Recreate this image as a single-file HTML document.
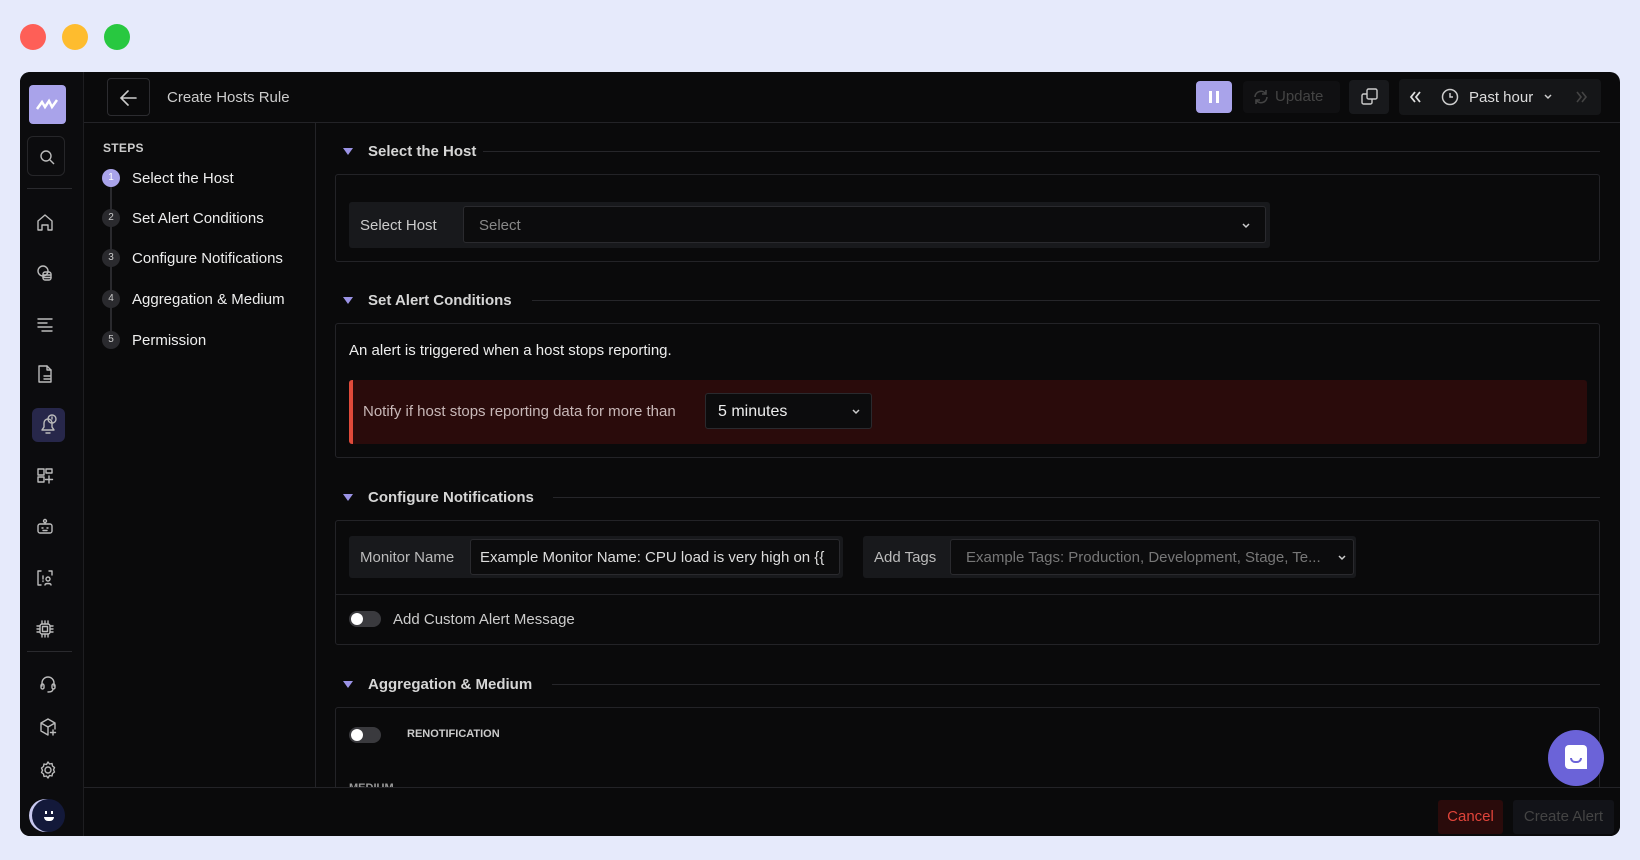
<!DOCTYPE html>
<html><head><meta charset="utf-8"><style>
*{box-sizing:border-box;margin:0;padding:0}
body{width:1640px;height:860px;background:#e6eafb;font-family:"Liberation Sans",sans-serif;position:relative;overflow:hidden;color:#ddd}
.a{position:absolute}
.dot{position:absolute;width:26px;height:26px;border-radius:50%;top:24px}
.win{position:absolute;left:20px;top:72px;width:1600px;height:764px;background:#0a0a0b;border-radius:10px;overflow:hidden}
.side{position:absolute;left:0;top:0;width:64px;height:764px;background:#0c0c0e;border-right:1px solid #1e1e21}
.ic{position:absolute;left:13px;width:24px;height:24px}
.ic svg{width:24px;height:24px;fill:none;stroke:#bbb;stroke-width:1.4;stroke-linecap:round;stroke-linejoin:round}
.hd{font-size:15px;font-weight:bold;color:#d6d6d6}
.tri{position:absolute;width:0;height:0;border-left:5px solid transparent;border-right:5px solid transparent;border-top:7px solid #9b93e6}
.line{position:absolute;height:1px;background:#26262a}
.box{position:absolute;left:315px;width:1265px;border:1px solid #232327;border-radius:3px}
.grp{position:absolute;background:#18191c;border-radius:3px}
.inp{position:absolute;background:#0c0c0d;border:1px solid #2a2a2e;border-radius:3px;font-size:15px}
.tog{position:absolute;width:32px;height:16px;border-radius:8px;background:#3a3a3e}
.tog:after{content:"";position:absolute;left:2px;top:2px;width:12px;height:12px;border-radius:50%;background:#fff}
.step{position:absolute;left:112px;font-size:15px;color:#eee}
.num{position:absolute;left:82px;width:18px;height:18px;border-radius:50%;background:#2a2a2e;color:#ccc;font-size:10px;text-align:center;line-height:18px}
</style></head><body>
<div class="dot" style="left:20px;background:#fe5f57"></div>
<div class="dot" style="left:62px;background:#febc2e"></div>
<div class="dot" style="left:104px;background:#28c840"></div>
<div class="win">
 <div class="side">
  <div class="a" style="left:9px;top:13px;width:37px;height:39px;background:#a9a3ea;border-radius:4px"><svg width="37" height="39"><path d="M8 24 L13 17 L16 22 L20 16 L23 22 L28 15" stroke="#fff" stroke-width="2.5" fill="none"/></svg></div>
  <div class="a" style="left:7px;top:64px;width:38px;height:40px;border:1px solid #262629;border-radius:6px"><svg width="38" height="40" style="fill:none;stroke:#bbb;stroke-width:1.4"><circle cx="18" cy="19" r="5"/><path d="M22 23l4 4"/></svg></div>
  <div class="a" style="left:7px;top:116px;width:45px;height:1px;background:#2a2a2e"></div>
  <div class="ic" style="top:138px"><svg><path d="M5 20V11l7-6 7 6v9h-4v-5h-6v5z"/></svg></div>
  <div class="ic" style="top:189px"><svg><circle cx="10" cy="10" r="5"/><rect x="10" y="11" width="8" height="8" rx="2"/><path d="M10 14h8M10 16.5h8"/></svg></div>
  <div class="ic" style="top:240px"><svg><path d="M5 7h14M5 11h9M5 15h14M9 19h10"/></svg></div>
  <div class="ic" style="top:290px"><svg><path d="M6 4h8l4 4v12H6z"/><path d="M14 4v4h4M11 14h6M11 17h6"/></svg></div>
  <div class="a" style="left:12px;top:336px;width:33px;height:34px;background:#27274a;border-radius:6px"></div>
  <div class="ic" style="top:341px;left:16px"><svg><path d="M6 17h12l-2-3v-4a4 4 0 0 0-8 0v4zM10 20h4"/><circle cx="16" cy="6" r="4"/><path d="M16 4v2"/></svg></div>
  <div class="ic" style="top:392px"><svg><rect x="5" y="5" width="6" height="6"/><rect x="13" y="5" width="6" height="4"/><rect x="5" y="13" width="6" height="5"/><path d="M16 12v7M12.5 15.5h7"/></svg></div>
  <div class="ic" style="top:443px"><svg><rect x="5" y="9" width="14" height="9" rx="2"/><circle cx="12" cy="6" r="1.5"/><path d="M12 7.5V9M9 13h1M14 13h1M10 15.5h4"/></svg></div>
  <div class="ic" style="top:494px"><svg><path d="M8 5H5v14h3M16 5h3v4"/><path d="M10 10v3M10 15v.5"/><circle cx="15" cy="13" r="2"/><path d="M12 19c0-2 6-2 6 0"/></svg></div>
  <div class="ic" style="top:545px"><svg><rect x="7" y="7" width="10" height="10" rx="2"/><rect x="9.5" y="9.5" width="5" height="5"/><path d="M4 9h3M4 12h3M4 15h3M17 9h3M17 12h3M17 15h3M9 4v3M12 4v3M15 4v3M9 17v3M12 17v3M15 17v3"/></svg></div>
  <div class="a" style="left:7px;top:579px;width:45px;height:1px;background:#2a2a2e"></div>
  <div class="ic" style="top:600px;left:16px"><svg><path d="M6 14v-3a6 6 0 0 1 12 0v3"/><rect x="5" y="12" width="3" height="5" rx="1.5"/><rect x="16" y="12" width="3" height="5" rx="1.5"/><path d="M17 17c0 2-2 3-5 3"/></svg></div>
  <div class="ic" style="top:643px;left:16px"><svg><path d="M12 4l7 4v6M5 8l7-4M5 8v8l7 4M5 8l7 4 7-4M12 12v8M17 15v5M14.5 17.5h5"/></svg></div>
  <div class="ic" style="top:686px;left:16px"><svg><circle cx="12" cy="12" r="3"/><path d="M12 4l1.5 2 2.5-.5.5 2.5 2 1.5-1 2.3 1 2.2-2 1.5-.5 2.5-2.5-.5L12 20l-1.5-2-2.5.5-.5-2.5-2-1.5 1-2.2-1-2.3 2-1.5.5-2.5 2.5.5z"/></svg></div>
  <div class="a" style="left:12px;top:727px;width:33px;height:33px;border-radius:50%;background:#13193a;box-shadow:-3px 0 0 #c8c8f0"><div class="a" style="left:13px;top:12px;width:2px;height:3px;background:#fff"></div><div class="a" style="left:19px;top:12px;width:2px;height:3px;background:#fff"></div><div class="a" style="left:12px;top:18px;width:10px;height:4px;border-radius:0 0 5px 5px;background:#fff"></div></div>
 </div>
 <!-- header -->
 <div class="a" style="left:64px;top:50px;width:1536px;height:1px;background:#232327"></div>
 <div class="a" style="left:87px;top:6px;width:43px;height:38px;border:1px solid #2c2c30;border-radius:4px"><svg width="43" height="38" style="fill:none;stroke:#ccc;stroke-width:1.6;stroke-linecap:round"><path d="M28 19H14M20 12l-7 7 7 7"/></svg></div>
 <div class="a" style="left:147px;top:17px;font-size:15px;color:#ccc">Create Hosts Rule</div>
 <div class="a" style="left:1176px;top:9px;width:36px;height:32px;background:#a9a3ea;border-radius:4px"><div class="a" style="left:13px;top:10px;width:3px;height:12px;background:#fff"></div><div class="a" style="left:20px;top:10px;width:3px;height:12px;background:#fff"></div></div>
 <div class="a" style="left:1223px;top:9px;width:97px;height:32px;background:#101012;border-radius:4px;color:#444;font-size:15px;line-height:32px;padding-left:32px">Update<svg class="a" style="left:9px;top:7px;fill:none;stroke:#444;stroke-width:1.6" width="18" height="18"><path d="M3 9a6 6 0 0 1 11-3M15 9a6 6 0 0 1-11 3M14 2v4h-4M4 16v-4h4"/></svg></div>
 <div class="a" style="left:1329px;top:8px;width:40px;height:34px;background:#18191c;border-radius:4px"><svg width="40" height="34" style="fill:none;stroke:#ccc;stroke-width:1.4"><rect x="18" y="9" width="10" height="10" rx="1.5"/><path d="M18 14h-3.5a1.5 1.5 0 0 0-1.5 1.5v7a1.5 1.5 0 0 0 1.5 1.5h7a1.5 1.5 0 0 0 1.5-1.5V19"/></svg></div>
 <div class="a" style="left:1379px;top:7px;width:202px;height:36px;background:#151618;border-radius:4px">
  <svg class="a" style="left:8px;top:10px;fill:none;stroke:#ddd;stroke-width:1.8" width="18" height="16"><path d="M8 3L4 8l4 5M13 3L9 8l4 5"/></svg>
  <svg class="a" style="left:42px;top:9px;fill:none;stroke:#ccc;stroke-width:1.5" width="18" height="18"><circle cx="9" cy="9" r="7.5"/><path d="M9 5v4h3"/></svg>
  <div class="a" style="left:70px;top:10px;font-size:15px;color:#ddd">Past hour</div>
  <svg class="a" style="left:144px;top:13px;fill:none;stroke:#ccc;stroke-width:1.5" width="10" height="10"><path d="M2 3l3 3 3-3"/></svg>
  <svg class="a" style="left:174px;top:10px;fill:none;stroke:#444;stroke-width:1.6" width="18" height="16"><path d="M4 3l4 5-4 5M9 3l4 5-4 5"/></svg>
 </div>
 <!-- steps -->
 <div class="a" style="left:295px;top:51px;width:1px;height:664px;background:#232327"></div>
 <div class="a" style="left:83px;top:69px;font-size:12px;font-weight:bold;color:#ccc;letter-spacing:.3px">STEPS</div>
 <div class="a" style="left:90px;top:106px;width:2px;height:160px;background:#2a2a2e"></div>
 <div class="num" style="top:97px;background:#a9a3ea;color:#fff">1</div><div class="step" style="top:98px">Select the Host</div>
 <div class="num" style="top:137px">2</div><div class="step" style="top:138px">Set Alert Conditions</div>
 <div class="num" style="top:177px">3</div><div class="step" style="top:178px">Configure Notifications</div>
 <div class="num" style="top:218px">4</div><div class="step" style="top:219px">Aggregation &amp; Medium</div>
 <div class="num" style="top:259px">5</div><div class="step" style="top:260px">Permission</div>
 <!-- content -->
 <div class="tri" style="left:323px;top:76px"></div><div class="a hd" style="left:348px;top:71px">Select the Host</div><div class="line" style="left:463px;top:79px;width:1117px"></div>
 <div class="box" style="top:102px;height:88px">
  <div class="grp" style="left:13px;top:27px;width:921px;height:46px"><div class="a" style="left:11px;top:15px;font-size:15px;color:#ccc">Select Host</div>
   <div class="inp" style="left:114px;top:4px;width:803px;height:37px;color:#888;padding:10px 15px">Select<svg class="a" style="right:14px;top:14px;fill:none;stroke:#ccc;stroke-width:1.5" width="10" height="10"><path d="M2 3l3 3 3-3"/></svg></div></div>
 </div>
 <div class="tri" style="left:323px;top:225px"></div><div class="a hd" style="left:348px;top:220px">Set Alert Conditions</div><div class="line" style="left:512px;top:228px;width:1068px"></div>
 <div class="box" style="top:251px;height:135px">
  <div class="a" style="left:13px;top:18px;font-size:15px;color:#eee">An alert is triggered when a host stops reporting.</div>
  <div class="a" style="left:13px;top:56px;width:1238px;height:64px;background:#2a0b0b;border-left:4px solid #e04a3a;border-radius:3px">
   <div class="a" style="left:10px;top:23px;font-size:15px;color:#c8b8b8">Notify if host stops reporting data for more than</div>
   <div class="inp" style="left:352px;top:13px;width:167px;height:36px;color:#eee;padding:9px 12px;font-size:16px">5 minutes<svg class="a" style="right:10px;top:13px;fill:none;stroke:#ccc;stroke-width:1.5" width="10" height="10"><path d="M2 3l3 3 3-3"/></svg></div>
  </div>
 </div>
 <div class="tri" style="left:323px;top:422px"></div><div class="a hd" style="left:348px;top:417px">Configure Notifications</div><div class="line" style="left:533px;top:425px;width:1047px"></div>
 <div class="box" style="top:448px;height:125px">
  <div class="grp" style="left:13px;top:15px;width:494px;height:42px"><div class="a" style="left:11px;top:13px;font-size:15px;color:#bbb">Monitor Name</div>
   <div class="inp" style="left:121px;top:3px;width:370px;height:36px;color:#ddd;padding:9px 9px;white-space:nowrap;overflow:hidden">Example Monitor Name: CPU load is very high on {{</div></div>
  <div class="grp" style="left:527px;top:15px;width:493px;height:42px"><div class="a" style="left:11px;top:13px;font-size:15px;color:#bbb">Add Tags</div>
   <div class="inp" style="left:87px;top:3px;width:404px;height:36px;color:#777;padding:9px 15px;white-space:nowrap">Example Tags: Production, Development, Stage, Te...<svg class="a" style="right:6px;top:13px;fill:none;stroke:#ccc;stroke-width:1.5" width="10" height="10"><path d="M2 3l3 3 3-3"/></svg></div></div>
  <div class="a" style="left:0;top:73px;width:1263px;height:1px;background:#232327"></div>
  <div class="tog" style="left:13px;top:90px"></div>
  <div class="a" style="left:57px;top:90px;font-size:15px;color:#ccc">Add Custom Alert Message</div>
 </div>
 <div class="tri" style="left:323px;top:609px"></div><div class="a hd" style="left:348px;top:604px">Aggregation &amp; Medium</div><div class="line" style="left:532px;top:612px;width:1048px"></div>
 <div class="box" style="top:635px;height:140px">
  <div class="tog" style="left:13px;top:19px"></div>
  <div class="a" style="left:71px;top:20px;font-size:11px;font-weight:bold;color:#ccc">RENOTIFICATION</div>
  <div class="a" style="left:13px;top:74px;font-size:11px;font-weight:bold;color:#999">MEDIUM</div>
 </div>
 <!-- footer -->
 <div class="a" style="left:64px;top:715px;width:1536px;height:49px;background:#0a0a0b;border-top:1px solid #232327"></div>
 <div class="a" style="left:1418px;top:728px;width:65px;height:34px;background:#2a0b0b;border-radius:3px;color:#e0443a;font-size:15px;text-align:center;line-height:34px">Cancel</div>
 <div class="a" style="left:1493px;top:728px;width:101px;height:34px;background:#121318;border-radius:3px;color:#444;font-size:15px;text-align:center;line-height:34px">Create Alert</div>
 <div class="a" style="left:1528px;top:658px;width:56px;height:56px;border-radius:50%;background:#6b63d8"><div class="a" style="left:17px;top:15px;width:22px;height:24px;background:#fff;border-radius:4px 4px 0 4px"></div><div class="a" style="left:22px;top:28px;width:12px;height:5px;border:2px solid #6b63d8;border-top:none;border-radius:0 0 6px 6px"></div></div>
</div>
</body></html>
